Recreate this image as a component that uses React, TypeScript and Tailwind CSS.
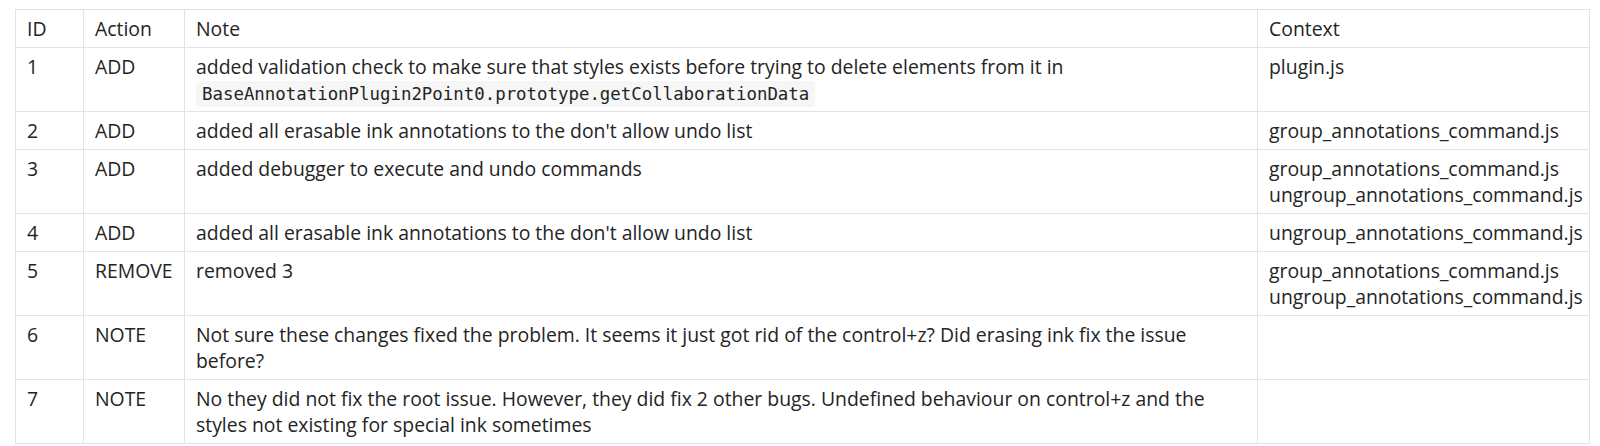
import React from "react";

interface Entry {
  id: number;
  action: string;
  note: React.ReactNode;
  context: string[];
}

const entries: Entry[] = [
  {
    id: 1,
    action: "ADD",
    note: (
      <>
        added validation check to make sure that styles exists before trying to delete elements from it in{" "}
        <code className="rounded-[4px] bg-[#f6f6f6] px-[6px] py-[3px] font-['DejaVu_Sans_Mono',monospace] text-[17.4px] leading-none">
          BaseAnnotationPlugin2Point0.prototype.getCollaborationData
        </code>
      </>
    ),
    context: ["plugin.js"],
  },
  {
    id: 2,
    action: "ADD",
    note: "added all erasable ink annotations to the don't allow undo list",
    context: ["group_annotations_command.js"],
  },
  {
    id: 3,
    action: "ADD",
    note: "added debugger to execute and undo commands",
    context: ["group_annotations_command.js", "ungroup_annotations_command.js"],
  },
  {
    id: 4,
    action: "ADD",
    note: "added all erasable ink annotations to the don't allow undo list",
    context: ["ungroup_annotations_command.js"],
  },
  {
    id: 5,
    action: "REMOVE",
    note: "removed 3",
    context: ["group_annotations_command.js", "ungroup_annotations_command.js"],
  },
  {
    id: 6,
    action: "NOTE",
    note: "Not sure these changes fixed the problem. It seems it just got rid of the control+z? Did erasing ink fix the issue before?",
    context: [],
  },
  {
    id: 7,
    action: "NOTE",
    note: "No they did not fix the root issue. However, they did fix 2 other bugs. Undefined behaviour on control+z and the styles not existing for special ink sometimes",
    context: [],
  },
];

const cell = "border border-[#e3e3e3] px-[11px] pt-[6px] pb-[5px] align-top";

export default function App() {
  return (
    <div className="bg-white pl-[15px] pr-[10px] pt-[9px] font-['Open_Sans',sans-serif] text-[19.4px] leading-[26px] text-[#242424]">
      <table className="w-full table-fixed border-collapse text-left">
        <colgroup>
          <col className="w-[68px]" />
          <col className="w-[101px]" />
          <col />
          <col className="w-[332px]" />
        </colgroup>
        <thead>
          <tr>
            <th className={`${cell} font-normal`}>ID</th>
            <th className={`${cell} font-normal`}>Action</th>
            <th className={`${cell} font-normal`}>Note</th>
            <th className={`${cell} font-normal`}>Context</th>
          </tr>
        </thead>
        <tbody>
          {entries.map((e) => (
            <tr key={e.id}>
              <td className={cell}>{e.id}</td>
              <td className={cell}>{e.action}</td>
              <td className={cell}>{e.note}</td>
              <td className={`${cell} whitespace-nowrap`}>
                {e.context.map((c) => (
                  <div key={c}>{c}</div>
                ))}
              </td>
            </tr>
          ))}
        </tbody>
      </table>
    </div>
  );
}
